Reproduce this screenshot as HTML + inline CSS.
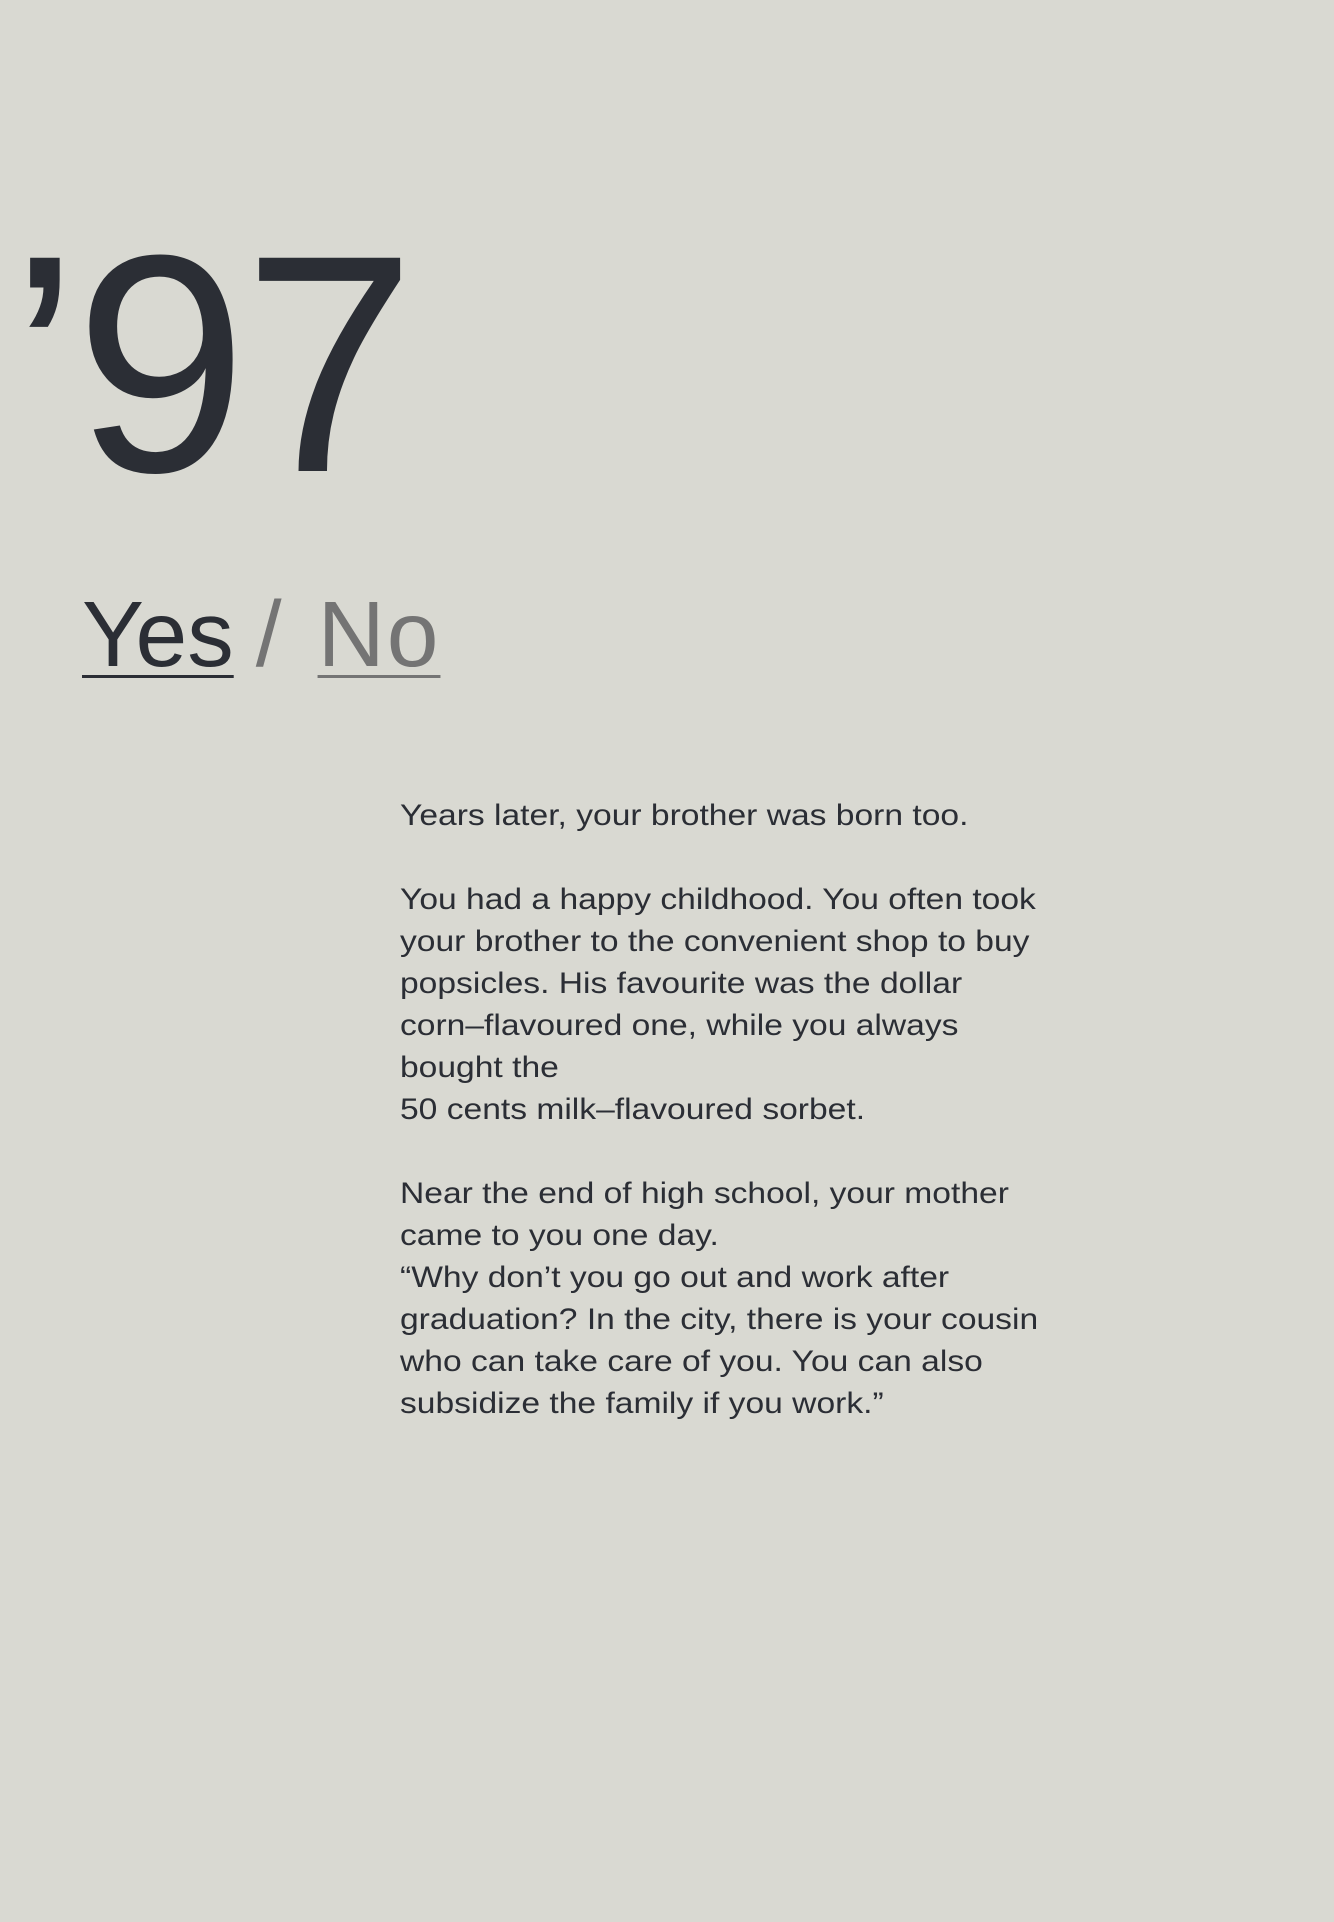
<!DOCTYPE html>
<html><head><meta charset="utf-8"><style>
html,body{margin:0;padding:0}
body{width:1334px;height:1922px;background:#d9d9d2;position:relative;overflow:hidden;font-family:"Liberation Sans",sans-serif;color:#2b2e35}
.big{position:absolute;left:10px;top:209px;font-size:310px;line-height:1;letter-spacing:-4px;white-space:nowrap}
.yn{position:absolute;left:82px;top:588px;font-size:93px;line-height:1;white-space:nowrap}
.yn .y{text-decoration:underline;text-decoration-thickness:3px;text-underline-offset:9px}
.yn .s{color:#747474;margin:0 36px 0 22px}
.yn .n{color:#747474;text-decoration:underline;text-decoration-thickness:3px;text-underline-offset:9px;letter-spacing:2px}
.txt{position:absolute;left:400px;top:795px;font-size:30px;line-height:42px;white-space:nowrap;transform:scaleX(1.12);transform-origin:0 0}
</style></head><body>
<div class="big">’97</div>
<div class="yn"><span class="y">Yes</span><span class="s">/</span><span class="n">No</span></div>
<div class="txt">Years later, your brother was born too.<br><br>You had a happy childhood. You often took<br>your brother to the convenient shop to buy<br>popsicles. His favourite was the dollar<br>corn–flavoured one, while you always<br>bought the<br>50 cents milk–flavoured sorbet.<br><br>Near the end of high school, your mother<br>came to you one day.<br>“Why don’t you go out and work after<br>graduation? In the city, there is your cousin<br>who can take care of you. You can also<br>subsidize the family if you work.”</div>
</body></html>
